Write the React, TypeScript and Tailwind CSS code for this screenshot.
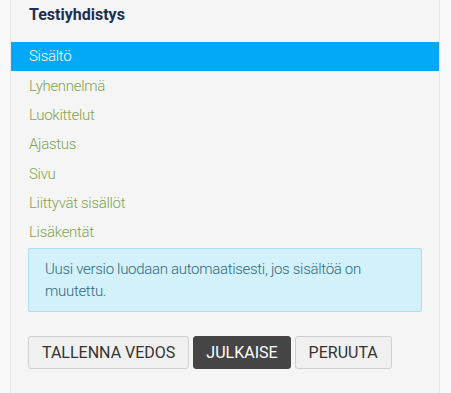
import React from "react";

const items = [
  "Sisältö",
  "Lyhennelmä",
  "Luokittelut",
  "Ajastus",
  "Sivu",
  "Liittyvät sisällöt",
  "Lisäkentät",
];

export default function App() {
  return (
    <div className="w-[451px] h-[393px] overflow-hidden bg-[#f9f9f9] font-['Roboto',_'Liberation_Sans',_sans-serif]">
      <div className="ml-[10px] w-[430px] h-full bg-[#f5f5f5] border-x border-[#e6e6e6]">
        <div className="pt-[5px] pl-[18px] h-[42px] text-[16px] leading-[20px] font-bold text-[#1c2f52]">
          Testiyhdistys
        </div>
        <ul>
          {items.map((t, i) => (
            <li
              key={t}
              className={
                i === 0
                  ? "h-[29.3px] flex items-center pl-[18px] text-[15px] tracking-[-0.3px] font-light bg-[#03a9f8] text-white"
                  : "h-[29.3px] flex items-center pl-[18px] text-[15px] tracking-[-0.3px] font-light text-[#7fa34d]"
              }
            >
              {t}
            </li>
          ))}
        </ul>
        <div className="mt-[1px] mx-[17px] border border-[#abdff0] bg-[#d2f1fb] rounded-[2px] px-[16px] py-[9px] text-[15px] tracking-[-0.3px] leading-[22px] font-light text-[#2f6880]">
          Uusi versio luodaan automaatisesti, jos sisältöä on muutettu.
        </div>
        <div className="mt-[24px] ml-[17px] flex gap-[4px]">
          <button className="border border-[#cfcfcf] bg-[#f0f0f0] rounded-[3px] px-[13px] py-[5px] text-[16px] leading-[21px] text-[#333]">
            TALLENNA VEDOS
          </button>
          <button className="border border-[#444] bg-[#454545] rounded-[3px] px-[12px] py-[5px] text-[16px] leading-[21px] text-white">
            JULKAISE
          </button>
          <button className="border border-[#cfcfcf] bg-[#f0f0f0] rounded-[3px] px-[13px] py-[5px] text-[16px] leading-[21px] text-[#333]">
            PERUUTA
          </button>
        </div>
      </div>
    </div>
  );
}
